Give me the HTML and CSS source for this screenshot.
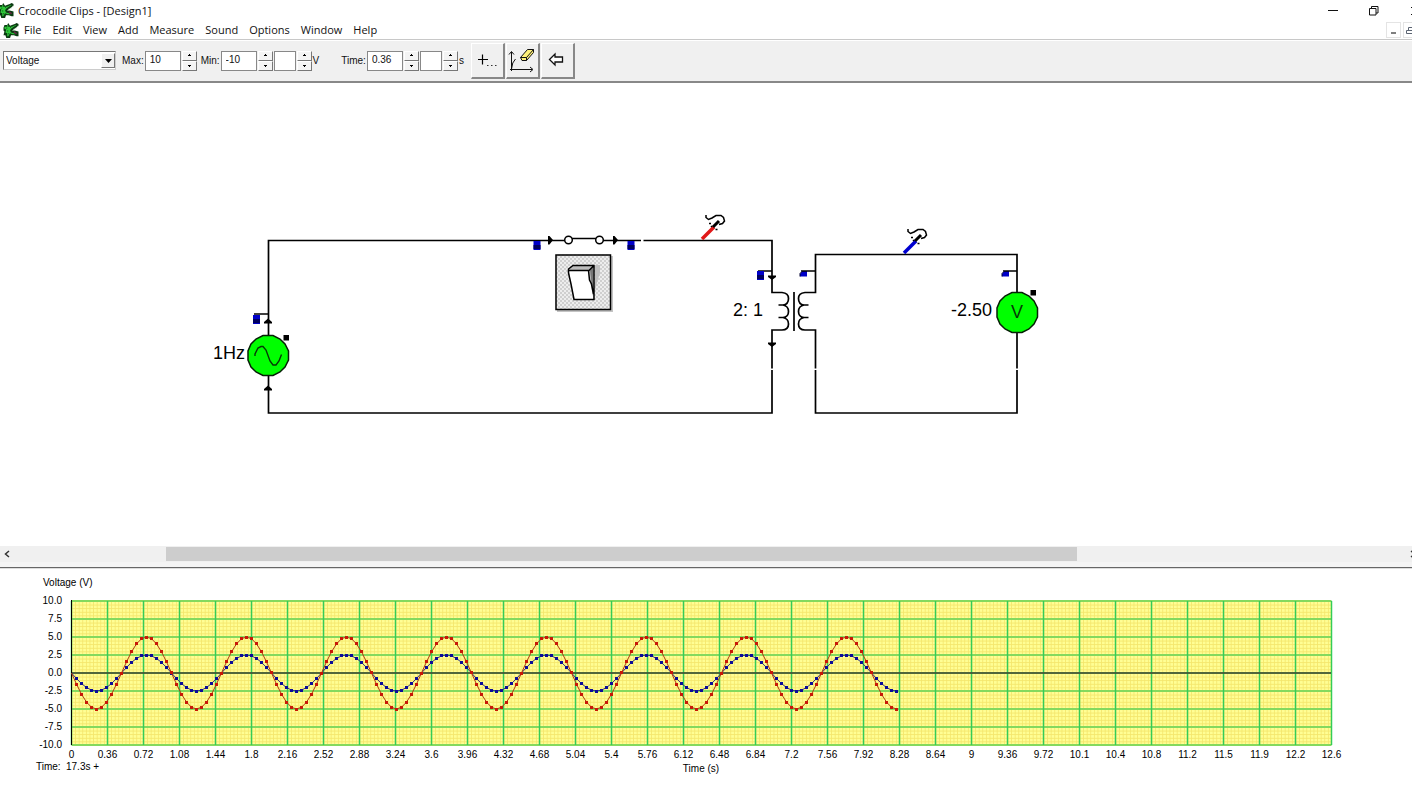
FILE: index.html
```html
<!DOCTYPE html>
<html lang="en">
<head>
<meta charset="utf-8">
<title>Crocodile Clips - [Design1]</title>
<link rel="stylesheet" href="styles.css">
</head>
<body>
<svg class="defs" width="0" height="0" aria-hidden="true">
  <symbol id="croc" viewBox="0 0 16 16">
    <path d="M0 5L1 2L4 2L5 0L7 3L9 2L12 1L14 0L16 1L16 3L12 6L9 8L12 8L16 9L16 14L14 14L11 13L8 13L7 16H3L2 13H0L1 9L0 8Z" fill="#0b3a12"/>
    <path d="M1 4H4V2H5V4H9L13 2H14L11 4L8 6L7 8L8 10L11 11L13 12L10 12L7 11L5 14H4V11L2 10L3 7L1 6Z" fill="#2fc83a"/>
    <path d="M3 5.500H4M7 4.500H8M4 8.500H5M5 11.500H6" stroke="#0b3a12"/>
    <path d="M11 9.500L14 11.500" stroke="#6b2348" stroke-width="1.500"/>
    <path d="M11.500 6v1.500M13.500 5v1.500M15.500 3v1.500" stroke="#dff5df"/>
  </symbol>
  <symbol id="spin-up" viewBox="0 0 5 3"><path d="M2 0h1v1h1v1H1V1h1z"/></symbol>
  <symbol id="spin-down" viewBox="0 0 5 3"><path d="M1 1h3v1H3v1H2V2H1z"/></symbol>
</svg>

<header class="titlebar">
  <svg class="app-icon title-icon"><use href="#croc"/></svg>
  <h1 class="title">Crocodile Clips - [Design1]</h1>
  <div class="window-controls">
    <button class="win-btn" aria-label="Minimize"><svg width="10" height="10"><path d="M0 4.500h10" stroke="#111"/></svg></button>
    <button class="win-btn" aria-label="Restore"><svg width="10" height="10" fill="none" stroke="#111"><path d="M.5 2.500h6.500v6.500h-6.500zM2.500 2.500v-2h6.500v6.500h-2"/></svg></button>
    <button class="win-btn" aria-label="Close"><svg width="10" height="10"><path d="M1 1l8 8M9 1l-8 8" stroke="#111"/></svg></button>
  </div>
</header>

<nav class="menubar" aria-label="Main menu">
  <svg class="app-icon"><use href="#croc"/></svg>
  <div class="menus">
    <button class="menu">File</button><button class="menu">Edit</button><button class="menu">View</button><button class="menu">Add</button><button class="menu">Measure</button><button class="menu">Sound</button><button class="menu">Options</button><button class="menu">Window</button><button class="menu">Help</button>
  </div>
  <div class="doc-controls">
    <button class="doc-btn" aria-label="Minimize document"><svg width="9" height="10"><path d="M2 8h5" stroke="#555" stroke-width="1.500"/></svg></button>
    <button class="doc-btn" aria-label="Restore document"><svg width="9" height="10" fill="none" stroke="#5b6472"><path d="M.5 5.500h6v3h-6zM2.500 5.500v-3h6v4h-2"/></svg></button>
  </div>
</nav>

<div class="toolbar">
  <div class="combo">
    <select class="select" aria-label="Quantity"><option>Voltage</option></select>
    <span class="combo-arrow"><svg width="7" height="4"><path d="M0 0h7L3.500 4z"/></svg></span>
  </div>
  <div class="field range-max">
    <label for="max">Max:</label><input id="max" class="box" value="10">
    <span class="spin"><button aria-label="Increase max"><svg><use href="#spin-up"/></svg></button><button aria-label="Decrease max"><svg><use href="#spin-down"/></svg></button></span>
  </div>
  <div class="field">
    <label for="min">Min:</label><input id="min" class="box" value="-10">
    <span class="spin"><button aria-label="Increase min"><svg><use href="#spin-up"/></svg></button><button aria-label="Decrease min"><svg><use href="#spin-down"/></svg></button></span>
    <input class="box narrow" aria-label="Voltage prefix">
    <span class="spin"><button aria-label="Next voltage prefix"><svg><use href="#spin-up"/></svg></button><button aria-label="Previous voltage prefix"><svg><use href="#spin-down"/></svg></button></span>
    <span class="unit">V</span>
  </div>
  <div class="field time">
    <label for="time">Time:</label><input id="time" class="box" value="0.36">
    <span class="spin"><button aria-label="Increase time"><svg><use href="#spin-up"/></svg></button><button aria-label="Decrease time"><svg><use href="#spin-down"/></svg></button></span>
    <input class="box narrow" aria-label="Time prefix">
    <span class="spin"><button aria-label="Next time prefix"><svg><use href="#spin-up"/></svg></button><button aria-label="Previous time prefix"><svg><use href="#spin-down"/></svg></button></span>
    <span class="unit">s</span>
  </div>
  <div class="tools">
    <button class="tool" aria-label="Add probe"><svg width="32" height="32"><path d="M7 15.500h10M11.500 10.500v10" stroke="#000" stroke-width="1.200"/><path d="M16 21.500h1.500M20 21.500h1.500M24 21.500h1.500" stroke="#333"/></svg></button>
    <button class="tool" aria-label="Clear graph"><svg width="32" height="32" fill="none" stroke="#111"><path d="M5.500 27V8M3 10.500L5.500 7.500L8 10.500M4 25.500H26M24 23l3 2.500l-3 2.500M5.500 25Q6 18 9.500 15" /><path d="M14.500 13.500L21.500 5.500H27.500V8.500L20.500 16.500H16z" fill="#fff27a"/><path d="M14.500 13.500H20.500L27.500 5.500M20.500 13.500V16.500"/></svg></button>
    <button class="tool" aria-label="Back"><svg width="32" height="32"><path d="M8.500 15.500L14 10V13H21.500V18H14V21Z" fill="#fff" stroke="#111" stroke-width="1.300"/></svg></button>
  </div>
</div>

<main class="stage">
<svg class="circuit" role="img" aria-label="Circuit with a 1Hz source, a switch, a 2:1 transformer and a voltmeter">
  <defs>
    <pattern id="dither" width="4" height="4" patternUnits="userSpaceOnUse"><rect width="4" height="4" fill="#ededed"/><path d="M0 0h2v2H0zM2 2h2v2H2z" fill="#cfcfcf"/></pattern>
    <g id="terminal"><path d="M0 0h7v9H0z" fill="#0000c8"/><path d="M0 4h7v4H0z" fill="#000060"/></g>
    <g id="terminal-short"><path d="M0 5V2L2 0H7V5Z" fill="#0000c8"/><path d="M0 5V2L2 0H7" fill="none" stroke="#000030"/></g>
    <g id="probe-lead" fill="none" stroke="#000">
      <path d="M12 -12L18 -18" stroke-width="3"/>
      <path d="M5 -24V-21.500L7.500 -19.500L11 -21L15 -23.500H20L22.500 -21.500L23.500 -18L21.500 -15.500L18 -14.500" stroke-width="1.500"/>
      <path d="M8 -15.500h2M14.500 -9.500h2M10 -13l1 1" stroke-width="1.500"/>
    </g>
  </defs>
  <g transform="translate(0 -83)">
    <g class="wire">
      <path d="M268.500 335V240.500H565M571.500 238.500H596.500M603 240.500H641M643.500 240.500H772V292.500H782Q788.500 293 788.500 298.500Q788.500 304.500 783 305H778.500M783 305Q788.500 306 788.500 311.500Q788.500 317 783 317.500H778.500M783 317.500Q788.500 318.500 788.500 324Q788.500 330 782 330H772V368.500M772 370V413H268.500V376"/>
      <path d="M794 292V331"/>
      <path d="M1017 292V254.500H815.500V292.500H805Q798.500 293 798.500 298.500Q798.500 304.500 804 305H808.500M804 305Q798.500 306 798.500 311.500Q798.500 317 804 317.500H808.500M804 317.500Q798.500 318.500 798.500 324Q798.500 330 805 330H815.500V368.500M815.500 370V413H1017V370M1017 368.500V333"/>
      <path d="M254 314H268M758 271H772M801 271H815M1003 271H1017"/>
    </g>
    <use href="#terminal" x="253" y="315"/>
    <use href="#terminal" x="533.500" y="241"/>
    <use href="#terminal" x="627.500" y="241"/>
    <use href="#terminal" x="757" y="271"/>
    <use href="#terminal-short" x="800" y="271.500"/>
    <use href="#terminal-short" x="1002" y="271.500"/>
    <path d="M264 323.500V322L268 318.500L272 322V323.500ZM264 390.500V389L268 385.500L272 389V390.500ZM768 275.500V277L772 280L776 277V275.500ZM768 342.500V344L772 347L776 344V342.500ZM548 236H549.500L553 240L549.500 244.500H548ZM613 236H614.500L618 240L614.500 244.500H613Z"/>
    <circle class="contact" cx="568.500" cy="240" r="3.800"/><circle class="contact" cx="599.500" cy="240" r="3.800"/>

    <rect x="557" y="256" width="56" height="56" fill="#c4c4c4"/>
    <rect x="555.500" y="254.500" width="55" height="55" fill="url(#dither)"/>
    <rect x="556" y="255" width="54.500" height="54.500" fill="none" stroke="#000" stroke-width="1.500"/>
    <path d="M595 265H600V273L597 282L595 291Z" fill="#c0c0c0"/>
    <path d="M573 265.500H594V299.500H574L568.500 271V269Z" fill="#bdbdbd"/>
    <path d="M590 270L593 266V296Z" fill="#777"/>
    <path d="M569 271H589L590 281L593.500 299H574.500L571 284Z" fill="#fff"/>
    <path d="M573 265.500H594V299.500H574L571 284L568.500 273V269ZM568.500 270.500H588.500L589.500 280L591.500 284L593.500 294M589 270.500L594 265.500" fill="none" stroke="#000" stroke-width="1.500"/>

    <g transform="translate(701 239)"><path d="M1 0L13 -12" stroke="#e01818" stroke-width="3.500"/><use href="#probe-lead"/></g>
    <g transform="translate(903 253)"><path d="M1 0L13 -12" stroke="#0000d0" stroke-width="3.500"/><use href="#probe-lead"/></g>

    <path class="disc" d="M263 335.500H273L280 339L285 344L288.500 351V360L285 367L280 372L273 375.500H263L256 372L251 367L248 360V351L251 344L256 339Z"/>
    <path d="M255 356V354L258 348L261 346.500H263L266 350L270 361L273 365H276L279 361L281.500 354.500" fill="none" stroke="#063806" stroke-width="1.400"/>
    <path class="disc" d="M1012 292.500H1022L1029 296L1034 301L1037.500 308V317L1034 324L1029 329L1022 332.500H1012L1005 329L1000 324L997 317V308L1000 301L1005 296Z"/>
    <path d="M283.500 335H289V340.500H283.500ZM1030.500 290H1036V295.500H1030.500Z"/>
    <text class="part-label" x="213" y="359">1Hz</text>
    <text class="part-label" x="733" y="316">2: 1</text>
    <text class="part-label" x="992" y="316" text-anchor="end">-2.50</text>
    <text class="meter-letter" x="1017" y="318" text-anchor="middle">V</text>
  </g>
</svg>
</main>

<div class="hscroll">
  <button class="scroll-btn" aria-label="Scroll left"><svg width="6" height="8"><path d="M5 1L1.500 4L5 7" fill="none" stroke="#333" stroke-width="1.500"/></svg></button>
  <div class="track"><div class="thumb"></div></div>
  <button class="scroll-btn end" aria-label="Scroll right"><svg width="6" height="8"><path d="M1 1L4.500 4L1 7" fill="none" stroke="#333" stroke-width="1.500"/></svg></button>
</div>
<div class="splitter"></div>

<section class="graph" aria-label="Voltage graph">
<svg class="plot" id="plot">
  <defs><pattern id="minor" width="3.600" height="3.600" patternUnits="userSpaceOnUse" x="71.500" y="33"><rect width="3.600" height="3.600" fill="#fffe94"/><path d="M0 0H3.600M0 0V3.600" stroke="#f4e66c" stroke-width="1.600"/></pattern></defs>
  <text x="43" y="18">Voltage (V)</text>
  <rect x="71.500" y="33" width="1260" height="144" fill="url(#minor)"/>
  <g id="grid"></g>
  <path class="zero" d="M71 105H1331"/>
  <path class="axis" d="M71.500 32V177"/>
  <g id="series"></g>
  <g id="labels"></g>
  <text x="701" y="204" text-anchor="middle">Time (s)</text>
  <text x="36" y="202">Time:</text><text x="66" y="202">17.3s +</text>
</svg>
</section>
<script src="graph.js"></script>
</body>
</html>
```
FILE: styles.css
```css
* { box-sizing: border-box; }
body {
  margin: 0;
  min-height: 100vh;
  display: flex;
  flex-direction: column;
  overflow-x: hidden;
  background: #fff;
  color: #111;
  font: 10px/12px "Liberation Sans", Arial, sans-serif;
}
button, input, select { font: inherit; color: inherit; margin: 0; padding: 0; border-radius: 0; }
button { display: flex; align-items: center; justify-content: center; background: none; border: 0; }
svg { display: block; flex: none; }
.defs { position: absolute; }

.titlebar { display: flex; align-items: center; height: 21px; overflow: hidden; font-family: "Open Sans", sans-serif; }
.app-icon { width: 16px; height: 15px; }
.title-icon { margin-left: -2px; }
.title { margin: 0 0 0 4px; font-size: 11px; line-height: 16px; font-weight: 400; white-space: nowrap; }
.window-controls { display: flex; margin-left: auto; margin-right: -23px; }
.win-btn { width: 41px; height: 20px; }

.menubar { display: flex; align-items: center; height: 18px; padding-left: 3px; overflow: hidden; font: 11px/16px "Open Sans", sans-serif; }
.menus { display: flex; gap: 11px; margin-left: 5px; }
.doc-controls { display: flex; gap: 2px; margin-left: auto; margin-right: -6px; }
.doc-btn { width: 15px; height: 16px; border: 1px solid #e4e4e4; }

.toolbar {
  display: flex;
  align-items: center;
  height: 44px;
  padding: 0 3px;
  background: #f0f0f0;
  border-top: 1px solid #c8c8c8;
  border-bottom: 2px solid #888;
  box-shadow: inset 0 1px #fff;
}
.combo { position: relative; width: 113px; height: 19px; }
.select {
  appearance: none;
  width: 100%;
  height: 100%;
  padding: 0 2px;
  background: #fff;
  border: 1px solid #777;
  border-right-color: #ccc;
  border-bottom-color: #ccc;
}
.combo-arrow {
  position: absolute;
  top: 2px;
  right: 1px;
  display: flex;
  align-items: center;
  justify-content: center;
  width: 14px;
  height: 15px;
  background: #f0f0f0;
  border: 1px solid #fff;
  border-right-color: #777;
  border-bottom-color: #777;
  pointer-events: none;
}
.field { display: flex; align-items: center; gap: 1px; margin-left: 4px; }
.range-max { margin-left: 6px; }
.time { margin-left: 22px; }
.box { width: 36px; height: 20px; padding: 0 4px 2px; background: #fff; border: 1px solid #888; }
.narrow { width: 22px; }
.spin { display: flex; flex-direction: column; width: 15px; height: 20px; }
.spin button { flex: 1; background: #f4f4f4; border: 1px solid #fff; border-right-color: #777; border-bottom-color: #777; }
.spin svg { width: 5px; height: 3px; }
.unit { min-width: 6px; }
.tools { display: flex; gap: 1px; margin-left: 6px; }
.tool { width: 34px; height: 36px; background: #f0f0f0; border: 1px solid #fff; border-right: 2px solid #888; border-bottom: 2px solid #888; }

.stage { flex: 1; display: flex; min-height: 360px; }
.circuit { width: 100%; height: auto; flex: 1; }
.wire { fill: none; stroke: #000; stroke-width: 1.7; }
.contact { fill: #fff; stroke: #000; stroke-width: 1.5; }
.disc { fill: #00ff00; stroke: #062006; stroke-width: 1.5; }
.part-label { font-size: 18px; }
.meter-letter { font-size: 18px; fill: #063806; }

.hscroll { display: flex; height: 16px; background: #f0f0f0; overflow: hidden; }
.scroll-btn { width: 14px; height: 16px; }
.scroll-btn.end { margin-right: -8px; }
.track { flex: 1; padding: 1px 0; }
.thumb { width: 65.5%; height: 14px; margin-left: 10.9%; background: #cdcdcd; }
.splitter { height: 6px; background: #f4f4f4; border-bottom: 1px solid #666; box-shadow: 0 1px #ddd; }

.graph { display: flex; }
.plot { width: 100%; height: 219px; font-size: 10px; }
.grid-h { stroke: #84d95e; stroke-width: 2; }
.grid-v { stroke: #34cc58; stroke-width: 1.5; }
.zero { stroke: #404030; stroke-width: 1.5; }
.axis { stroke: #000; }
.red-line { fill: none; stroke: #b03a10; }
.blue-line { fill: none; stroke: #303080; }
.red-dot { fill: #c81808; }
.blue-dot { fill: #0c0c98; }
```
FILE: graph.js
```js
const left = 71.5, top_ = 33, cellW = 36, cellH = 18;
const cols = 35, rows = 8, zeroY = top_ + 4 * cellH;

let grid = '', labels = '';
for (let r = 0; r <= rows; r++) {
  const y = top_ + r * cellH;
  grid += `<path class="grid-h" d="M${left} ${y}H${left + cols * cellW}"/>`;
  labels += `<text x="62" y="${y + 3}" text-anchor="end">${(10 - r * 2.5).toFixed(1)}</text>`;
}
for (let c = 0; c <= cols; c++) {
  const x = left + c * cellW, t = c * 0.36;
  grid += `<path class="grid-v" d="M${x} ${top_}V${top_ + rows * cellH}"/>`;
  const label = t < 10 ? Number(t.toFixed(2)) : t.toFixed(1);
  labels += `<text x="${x}" y="190" text-anchor="middle">${label}</text>`;
}

function series(name, volts) {
  let line = '', dots = '';
  for (let i = 0; i <= 165; i++) {
    const x = left + i * 5;
    const y = zeroY + volts * 7.2 * Math.sin(i * Math.PI / 10);
    line += `${i ? 'L' : 'M'}${x} ${y.toFixed(2)}`;
    if (i) dots += `<rect class="${name}-dot" x="${x - 1.5}" y="${Math.round(y - 1.5)}" width="3" height="3"/>`;
  }
  return `<path class="${name}-line" d="${line}"/>${dots}`;
}

document.getElementById('grid').innerHTML = grid;
document.getElementById('labels').innerHTML = labels;
document.getElementById('series').innerHTML = series('blue', 2.5) + series('red', 5);
```
